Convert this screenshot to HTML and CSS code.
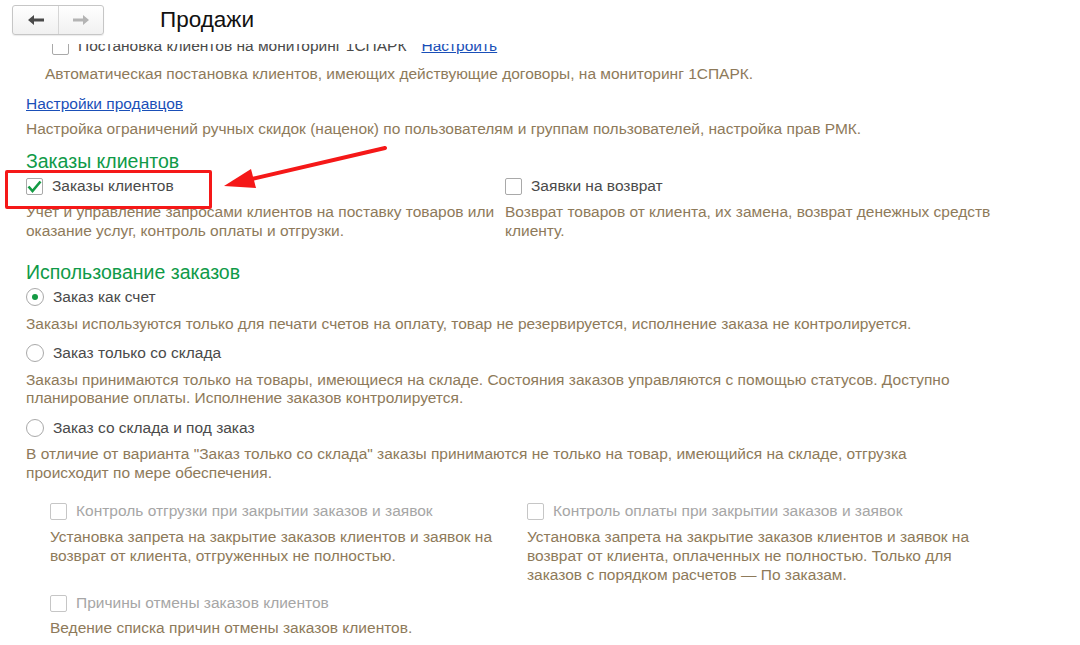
FILE: index.html
```html
<!DOCTYPE html>
<html lang="ru">
<head>
    <meta charset="UTF-8">
    <title>Продажи</title>
    <link rel="stylesheet" href="styles.css">
</head>
<body>
    <div class="window">
        <div class="header">
            <div class="nav">
                <button class="nav-btn">
                    <svg width="18" height="12" viewBox="0 0 18 12"><path d="M1 6 L7 1 L7 4.5 L17 4.5 L17 7.5 L7 7.5 L7 11 Z" fill="#4a4a4a"/></svg>
                </button>
                <button class="nav-btn">
                    <svg width="18" height="12" viewBox="0 0 18 12"><path d="M17 6 L11 1 L11 4.5 L1 4.5 L1 7.5 L11 7.5 L11 11 Z" fill="#b4b4b4"/></svg>
                </button>
            </div>
            <h1 class="title">Продажи</h1>
        </div>

        <div class="viewport">
            <div class="content">
                <!-- прокручено: первая строка частично под шапкой -->
                <div class="row indent">
                    <span class="box"></span>
                    <span class="label">Постановка клиентов на мониторинг 1СПАРК</span>
                    <a class="link setup" href="#">Настроить</a>
                </div>
                <p class="hint hint-indent">Автоматическая постановка клиентов, имеющих действующие договоры, на мониторинг 1СПАРК.</p>

                <a class="link sellers" href="#">Настройки продавцов</a>
                <p class="hint after-link">Настройка ограничений ручных скидок (наценок) по пользователям и группам пользователей, настройка прав РМК.</p>

                <h2 class="group">Заказы клиентов</h2>
                <div class="cols">
                    <div class="col">
                        <div class="row">
                            <span class="box checked">
                                <svg width="15" height="13" viewBox="0 0 15 13"><path d="M1.5 6.5 L5.5 11 L13.5 1.5" fill="none" stroke="#139a43" stroke-width="2.6"/></svg>
                            </span>
                            <span class="label">Заказы клиентов</span>
                        </div>
                        <p class="hint tight">Учет и управление запросами клиентов на поставку товаров или оказание услуг, контроль оплаты и отгрузки.</p>
                    </div>
                    <div class="col">
                        <div class="row">
                            <span class="box"></span>
                            <span class="label">Заявки на возврат</span>
                        </div>
                        <p class="hint tight">Возврат товаров от клиента, их замена, возврат денежных средств клиенту.</p>
                    </div>
                </div>

                <h2 class="group second">Использование заказов</h2>
                <div class="row">
                    <span class="radio on"></span>
                    <span class="label">Заказ как счет</span>
                </div>
                <p class="hint long">Заказы используются только для печати счетов на оплату, товар не резервируется, исполнение заказа не контролируется.</p>
                <div class="row">
                    <span class="radio"></span>
                    <span class="label">Заказ только со склада</span>
                </div>
                <p class="hint long">Заказы принимаются только на товары, имеющиеся на складе. Состояния заказов управляются с помощью статусов. Доступно планирование оплаты. Исполнение заказов контролируется.</p>
                <div class="row">
                    <span class="radio"></span>
                    <span class="label">Заказ со склада и под заказ</span>
                </div>
                <p class="hint long">В отличие от варианта "Заказ только со склада" заказы принимаются не только на товар, имеющийся на складе, отгрузка происходит по мере обеспечения.</p>

                <div class="cols sub">
                    <div class="col">
                        <div class="row">
                            <span class="box off"></span>
                            <span class="label muted">Контроль отгрузки при закрытии заказов и заявок</span>
                        </div>
                        <p class="hint sub-hint">Установка запрета на закрытие заказов клиентов и заявок на возврат от клиента, отгруженных не полностью.</p>
                    </div>
                    <div class="col">
                        <div class="row">
                            <span class="box off"></span>
                            <span class="label muted">Контроль оплаты при закрытии заказов и заявок</span>
                        </div>
                        <p class="hint sub-hint">Установка запрета на закрытие заказов клиентов и заявок на возврат от клиента, оплаченных не полностью. Только для заказов с порядком расчетов — По заказам.</p>
                    </div>
                </div>
                <div class="sub-single">
                    <div class="row">
                        <span class="box off"></span>
                        <span class="label muted">Причины отмены заказов клиентов</span>
                    </div>
                    <p class="hint single-hint">Ведение списка причин отмены заказов клиентов.</p>
                </div>
            </div>
        </div>

        <!-- пометки поверх скриншота -->
        <div class="mark-box"></div>
        <svg class="mark-arrow" width="180" height="60" viewBox="0 0 180 60">
            <line x1="163" y1="4" x2="30" y2="35" stroke="#f51818" stroke-width="4" stroke-linecap="round"/>
            <path d="M2 42 L29 25 L34 44 Z" fill="#f51818"/>
        </svg>
    </div>
</body>
</html>
```

FILE: styles.css
```css
* {
    margin: 0;
    padding: 0;
    box-sizing: border-box;
}

body {
    font-family: "Liberation Sans", Arial, sans-serif;
    font-size: 15.5px;
    color: #4a4a4a;
    background: white;
}

.window {
    position: relative;
    width: 1080px;
    height: 645px;
    overflow: hidden;
}

.header {
    height: 44px;
    display: flex;
    align-items: flex-start;
    background: white;
    position: relative;
    z-index: 2;
}

.nav {
    display: flex;
    margin: 5px 0 0 12px;
    border: 1px solid #c6c6c6;
    border-radius: 3px;
    background: linear-gradient(#ffffff, #f1f1f1);
    box-shadow: 0 1px 1px rgba(0, 0, 0, 0.08);
}

.nav-btn {
    width: 45px;
    height: 28px;
    border: none;
    background: none;
    display: flex;
    align-items: center;
    justify-content: center;
}

.nav-btn + .nav-btn {
    border-left: 1px solid #d6d6d6;
}

.title {
    margin: 7px 0 0 56px;
    font-size: 22.5px;
    font-weight: normal;
    color: #111;
}

.viewport {
    height: 601px;
    overflow: hidden;
}

.content {
    margin-top: -8px;
    padding-left: 26px;
}

.row {
    display: flex;
    align-items: center;
    height: 20px;
    white-space: nowrap;
}

.row.indent {
    padding-left: 26px;
}

.label {
    margin-left: 9px;
    color: #4a4a4a;
}

.label.muted {
    color: #a6a6a6;
}

.box {
    width: 17px;
    height: 17px;
    border: 1px solid #a9a9a9;
    border-radius: 2px;
    background: white;
    display: flex;
    align-items: center;
    justify-content: center;
    flex-shrink: 0;
}

.box.off {
    border-color: #c6c6c6;
}

.radio {
    width: 18px;
    height: 18px;
    border: 1px solid #a9a9a9;
    border-radius: 50%;
    display: flex;
    align-items: center;
    justify-content: center;
    flex-shrink: 0;
}

.radio.on::after {
    content: "";
    width: 6px;
    height: 6px;
    border-radius: 50%;
    background: #139a43;
}

.link {
    color: #1a4fb8;
    text-decoration: underline;
}

.link.setup {
    margin-left: 15px;
}

.link.sellers {
    display: block;
    margin-top: 11px;
    line-height: 19px;
}

.hint {
    color: #8e7a5a;
    line-height: 19px;
    margin-top: 8px;
    margin-bottom: 9px;
}

.hint.after-link {
    margin-top: 6px;
}

.hint.long {
    max-width: 960px;
    line-height: 18.5px;
    margin-top: 7.5px;
    margin-bottom: 10px;
}

.hint-indent {
    padding-left: 19px;
}

.hint.tight {
    margin-top: 6px;
}

.hint.sub-hint {
    margin-top: 6px;
}

.hint.single-hint {
    margin-top: 5px;
}

.group {
    font-size: 19.5px;
    font-weight: normal;
    color: #0f9a48;
    line-height: 22px;
    margin-top: 12px;
    margin-bottom: 4px;
}

.group.second {
    margin-top: 12px;
}

.cols {
    display: grid;
    grid-template-columns: 479px 500px;
}

.cols.sub {
    margin-left: 24px;
    margin-top: 19px;
    grid-template-columns: 477px 470px;
}

.sub-single {
    margin-left: 24px;
}

.mark-box {
    position: absolute;
    left: 5px;
    top: 170px;
    width: 207px;
    height: 39px;
    border: 3px solid #f51818;
    border-radius: 2px;
    z-index: 3;
}

.mark-arrow {
    position: absolute;
    left: 222px;
    top: 144px;
    z-index: 3;
}
```
